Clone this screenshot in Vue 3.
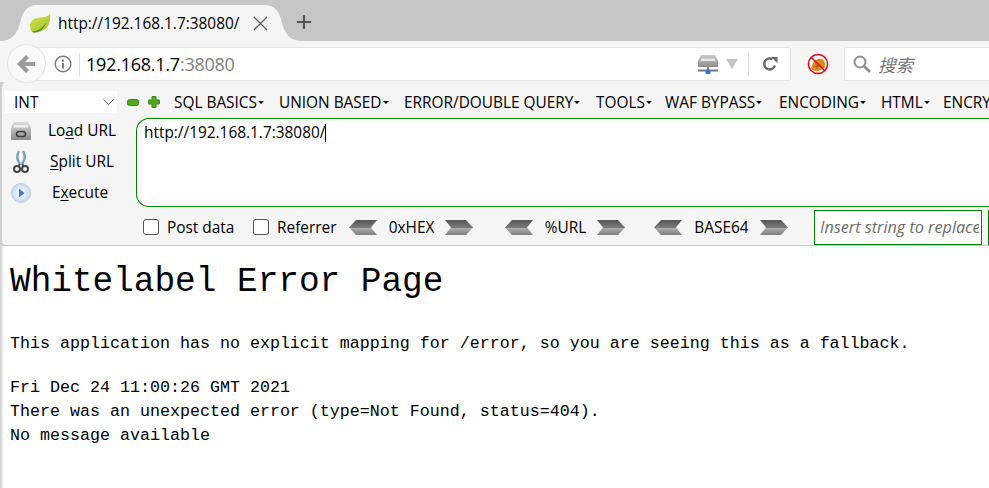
<script setup>
const menus = ['SQL BASICS', 'UNION BASED', 'ERROR/DOUBLE QUERY', 'TOOLS', 'WAF BYPASS', 'ENCODING', 'HTML', 'ENCRYPTION']
const lines = ['Fri Dec 24 11:00:26 GMT 2021', 'There was an unexpected error (type=Not Found, status=404).', 'No message available']
</script>

<template>
  <div class="window">
    <header class="tabstrip">
      <svg class="tabshape" width="302" height="37" viewBox="0 0 302 37">
        <path d="M0 37C12 37 17 30 20 19C23 6 28 1 38 1H264C274 1 279 6 282 19C285 30 290 37 302 37Z" fill="#f5f5f5" />
      </svg>
      <div class="tab">
        <svg class="leaf" width="22" height="20" viewBox="0 0 22 20">
          <defs>
            <linearGradient id="leafg" x1="0" y1="0" x2="1" y2="1">
              <stop offset="0" stop-color="#d2e04a" />
              <stop offset="1" stop-color="#a6c92e" />
            </linearGradient>
          </defs>
          <path d="M21 0.500C19.500 3.500 16.500 4 12 4.500C5 5 1 8 1 13C1 16 2 18.500 4.500 19.500C11 20 18.500 17 20.500 9C21.300 6 21.500 3 21 0.500Z" fill="url(#leafg)" />
          <path d="M3 18.500C8 18 14 15 17 9.500C16 15 11 19 5 19.500C4 19.500 3.500 19 3 18.500Z" fill="#4f8a32" />
        </svg>
        <span class="tabtitle">http://192.168.1.7:38080/</span>
        <svg class="close" width="15" height="15" viewBox="0 0 15 15"><path d="M1 1L14 14M14 1L1 14" stroke="#5c5c5c" stroke-width="1.300" fill="none" /></svg>
      </div>
      <svg class="newtab" width="16" height="16" viewBox="0 0 16 16"><path d="M8 1V15M1 8H15" stroke="#555" stroke-width="2.200" fill="none" /></svg>
    </header>

    <nav class="navbar">
      <button class="back">
        <svg width="18" height="18" viewBox="0 0 18 18"><path d="M9 0L0 9L9 18L12 15L8 11H18V7H8L12 3Z" fill="#9b9b9b" /></svg>
      </button>
      <div class="urlbox">
        <svg class="info" width="18" height="18" viewBox="0 0 18 18">
          <circle cx="9" cy="9" r="7.800" fill="none" stroke="#7a7a7a" stroke-width="1.400" />
          <rect x="8" y="8" width="2" height="5.500" fill="#7a7a7a" />
          <rect x="8" y="4.600" width="2" height="2" fill="#7a7a7a" />
        </svg>
        <span class="divider"></span>
        <span class="url">192.168.1.7<span class="port">:38080</span></span>
        <svg class="drive" width="22" height="20" viewBox="0 0 22 20">
          <defs>
            <linearGradient id="driveg" x1="0" y1="0" x2="0" y2="1">
              <stop offset="0" stop-color="#c9c9c9" />
              <stop offset="1" stop-color="#8f8f8f" />
            </linearGradient>
          </defs>
          <path d="M4 1H18L21 7V13H1V7Z" fill="url(#driveg)" />
          <rect x="4" y="4.500" width="14" height="2.500" fill="#e6e6e6" />
          <rect x="1" y="15.500" width="20" height="2" fill="#777" />
          <rect x="10" y="13" width="2" height="3" fill="#777" />
          <rect x="8.500" y="16" width="5" height="4" rx="1" fill="#2f78d6" />
        </svg>
        <svg class="drop" width="12" height="10" viewBox="0 0 12 10"><path d="M0 0H12L6 10Z" fill="#c4c4c4" /></svg>
        <span class="divider second"></span>
        <svg class="reload" width="16" height="16" viewBox="0 0 16 16">
          <path d="M13 9.500A5.500 5.500 0 1 1 10.500 3.200" fill="none" stroke="#6a6a6a" stroke-width="2.400" />
          <path d="M9 0.800L15.500 1V7.200Z" fill="#6a6a6a" />
        </svg>
      </div>
      <svg class="noscript" width="22" height="22" viewBox="0 0 22 22">
        <path d="M4 15L7 8L12 5.500L16 6.500L18.500 11L17 15.500L11 18L6 17.500Z" fill="#e28418" />
        <path d="M8 13L12 11.500L10 15Z" fill="#8a5a18" />
        <circle cx="11" cy="11" r="9.600" fill="none" stroke="#d3121e" stroke-width="1.500" />
        <path d="M4.200 4.200L17.800 17.800" stroke="#d3121e" stroke-width="1.500" />
      </svg>
      <div class="searchbox">
        <svg width="18" height="18" viewBox="0 0 18 18">
          <circle cx="7" cy="7" r="5.500" fill="none" stroke="#8f8f8f" stroke-width="2" />
          <path d="M11 11L17 17" stroke="#8f8f8f" stroke-width="2.600" />
        </svg>
        <span class="searchtext">搜索</span>
      </div>
    </nav>

    <section class="hackbar">
      <div class="menurow">
        <div class="select">
          <span>INT</span>
          <svg width="11" height="6" viewBox="0 0 11 6"><path d="M0.500 0.500L5.500 5.500L10.500 0.500" fill="none" stroke="#666" /></svg>
        </div>
        <svg class="pm" width="12" height="9" viewBox="0 0 12 9"><rect x="0.500" y="1.500" width="11" height="6" rx="2" fill="#52a81f" stroke="#3c8a14" /></svg>
        <svg class="pm plus" width="12" height="12" viewBox="0 0 12 12"><path d="M4 0.500H8V4H11.500V8H8V11.500H4V8H0.500V4H4Z" fill="#52a81f" stroke="#3c8a14" stroke-linejoin="round" /></svg>
        <div class="menus">
          <span v-for="m in menus" :key="m" class="menu">{{ m }}<i class="caret"></i></span>
        </div>
      </div>

      <div class="editrow">
        <div class="side">
          <div class="action">
            <svg width="22" height="20" viewBox="0 0 22 20">
              <defs>
                <linearGradient id="boxg" x1="0" y1="0" x2="0" y2="1">
                  <stop offset="0" stop-color="#dcdcdc" />
                  <stop offset="1" stop-color="#8a8a8a" />
                </linearGradient>
              </defs>
              <path d="M4 1H18L21 7V18Q21 19 20 19H2Q1 19 1 18V7Z" fill="url(#boxg)" />
              <rect x="4" y="4" width="14" height="2.500" fill="#efefef" />
              <rect x="6.500" y="10.500" width="9" height="5" rx="2.500" fill="none" stroke="#3f3f3f" stroke-width="1.500" />
            </svg>
            <span class="label">Lo<u>a</u>d URL</span>
          </div>
          <div class="action">
            <svg width="22" height="24" viewBox="0 0 22 24">
              <path d="M9 1C6.500 5 7 10 10 14M13 1C15.500 5 15 10 12 14" fill="none" stroke="#6f9cc7" stroke-width="2.200" />
              <circle cx="7" cy="19" r="3" fill="none" stroke="#444" stroke-width="2" />
              <circle cx="15" cy="19" r="3" fill="none" stroke="#444" stroke-width="2" />
              <path d="M10 14L8 16.500M12 14L14 16.500" stroke="#444" stroke-width="2" />
            </svg>
            <span class="label"><u>S</u>plit URL</span>
          </div>
          <div class="action">
            <svg width="22" height="22" viewBox="0 0 22 22">
              <defs>
                <radialGradient id="execg">
                  <stop offset="0" stop-color="#ffffff" />
                  <stop offset="1" stop-color="#c5d9f1" />
                </radialGradient>
              </defs>
              <circle cx="11" cy="11" r="9.500" fill="url(#execg)" stroke="#b5cdea" />
              <path d="M9 6.500L14.500 11L9 15.500Z" fill="#3f78c4" />
            </svg>
            <span class="label exec">E<u>x</u>ecute</span>
          </div>
        </div>
        <div class="editor">http://192.168.1.7:38080/<i class="cursor"></i></div>
      </div>

      <div class="optrow">
        <label class="check"><i class="box"></i>Post data</label>
        <label class="check ref"><i class="box"></i>Referrer</label>
        <div class="enc hex">
          <svg class="chev" width="28" height="15" viewBox="0 0 28 15"><path d="M7 0H28L22 7.500L28 15H7L0 7.500Z" fill="url(#cheg)" /><defs><linearGradient id="cheg" x1="0" y1="0" x2="0" y2="1"><stop offset="0" stop-color="#555" /><stop offset="0.500" stop-color="#7a7a7a" /><stop offset="0.520" stop-color="#b0b0b0" /><stop offset="1" stop-color="#7d7d7d" /></linearGradient></defs></svg>
          <span>0xHEX</span>
          <svg class="chev" width="28" height="15" viewBox="0 0 28 15"><path d="M0 0H21L28 7.500L21 15H0L6 7.500Z" fill="url(#cheg)" /></svg>
        </div>
        <div class="enc url-enc">
          <svg class="chev" width="28" height="15" viewBox="0 0 28 15"><path d="M7 0H28L22 7.500L28 15H7L0 7.500Z" fill="url(#cheg)" /></svg>
          <span>%URL</span>
          <svg class="chev" width="28" height="15" viewBox="0 0 28 15"><path d="M0 0H21L28 7.500L21 15H0L6 7.500Z" fill="url(#cheg)" /></svg>
        </div>
        <div class="enc b64">
          <svg class="chev" width="28" height="15" viewBox="0 0 28 15"><path d="M7 0H28L22 7.500L28 15H7L0 7.500Z" fill="url(#cheg)" /></svg>
          <span>BASE64</span>
          <svg class="chev" width="28" height="15" viewBox="0 0 28 15"><path d="M0 0H21L28 7.500L21 15H0L6 7.500Z" fill="url(#cheg)" /></svg>
        </div>
        <div class="replace"><span>Insert string to replace</span></div>
        <div class="replace with"></div>
      </div>
    </section>

    <main class="page">
      <h1>Whitelabel Error Page</h1>
      <p class="lead">This application has no explicit mapping for /error, so you are seeing this as a fallback.</p>
      <div v-for="l in lines" :key="l" class="line">{{ l }}</div>
    </main>
  </div>
</template>

<style scoped>
.window {
  width: 989px;
  height: 488px;
  overflow: hidden;
  background: #cfcfcf;
  font-family: "Open Sans", "Noto Sans", sans-serif;
  color: #000;
}
.tabstrip {
  position: relative;
  height: 41px;
  background: #c6c6c6;
  display: flex;
  align-items: flex-start;
}
.tabshape {
  position: absolute;
  left: 0;
  top: 4px;
}
.tab {
  position: relative;
  display: flex;
  align-items: center;
  margin-left: 29px;
  margin-top: 13px;
  height: 20px;
  width: 240px;
}
.leaf { flex: none; }
.tabtitle {
  margin-left: 7px;
  font-size: 15.400px;
  white-space: nowrap;
  width: 195px;
  flex: none;
}
.close { flex: none; }
.newtab {
  position: relative;
  margin-left: 27px;
  margin-top: 14px;
}
.navbar {
  height: 41px;
  background: #f5f5f5;
  display: flex;
  align-items: center;
  padding-left: 7px;
}
.back {
  position: relative;
  z-index: 1;
  width: 39px;
  height: 39px;
  flex: none;
  border-radius: 50%;
  background: #f9f9f9;
  border: 1px solid #e2e2e2;
  padding: 0;
  display: flex;
  align-items: center;
  justify-content: center;
  margin-top: 4px;
}
.back svg { margin-left: -2px; }
.urlbox {
  margin-left: -16px;
  width: 761px;
  height: 34px;
  flex: none;
  margin-top: 5px;
  box-sizing: border-box;
  background: #fff;
  border: 1px solid #e4e4e4;
  border-radius: 2px;
  display: flex;
  align-items: center;
  padding-left: 23px;
}
.info { flex: none; }
.divider {
  width: 1px;
  height: 23px;
  background: #dcdcdc;
  margin-left: 7px;
  flex: none;
}
.url {
  margin-left: 6px;
  font-size: 18px;
  letter-spacing: -0.240px;
  width: 611px;
  flex: none;
  white-space: nowrap;
}
.port { color: #7f7f7f; }
.drive { flex: none; }
.drop { margin-left: 7px; flex: none; }
.divider.second { margin-left: 10px; }
.reload { margin-left: 13px; flex: none; }
.noscript { margin-left: 16px; margin-top: 4px; flex: none; }
.searchbox {
  margin-left: 15px;
  margin-top: 5px;
  height: 34px;
  width: 200px;
  flex: none;
  box-sizing: border-box;
  background: #fff;
  border: 1px solid #e4e4e4;
  display: flex;
  align-items: center;
  padding-left: 8px;
}
.searchtext {
  margin-left: 7px;
  font-family: "Noto Sans CJK SC", sans-serif;
  font-style: italic;
  font-size: 17.500px;
  color: #777;
}
.hackbar {
  height: 164px;
  box-sizing: border-box;
  background: #f5f5f5;
  border-bottom: 1px solid #c8c8c8;
  border-left: 2px solid #cfcfcf;
  border-radius: 6px 0 0 6px;
}
.menurow {
  height: 36px;
  display: flex;
  align-items: center;
  padding-left: 3px;
  padding-top: 4px;
  box-sizing: border-box;
}
.select {
  width: 112px;
  height: 22px;
  flex: none;
  background: #fff;
  box-sizing: border-box;
  padding: 0 3px 0 9px;
  display: flex;
  align-items: center;
  justify-content: space-between;
  font-size: 15.400px;
}
.pm { margin-left: 10px; flex: none; }
.pm.plus { margin-left: 9px; }
.menus {
  margin-left: 14px;
  display: grid;
  grid-template-columns: 105px 125px 192px 69px 114px 102px 62px auto;
  white-space: nowrap;
  font-size: 15.400px;
}
.menu { display: flex; align-items: center; }
.caret {
  margin-left: 1px;
  width: 0;
  height: 0;
  border-left: 3px solid transparent;
  border-right: 3px solid transparent;
  border-top: 3px solid #000;
}
.editrow {
  display: flex;
  height: 89px;
}
.side {
  width: 134px;
  flex: none;
  display: flex;
  flex-direction: column;
  margin-top: -3px;
}
.action {
  height: 31px;
  flex: none;
  display: flex;
  align-items: center;
  padding-left: 8px;
}
.action svg { flex: none; }
.label {
  margin-left: 16px;
  width: 68px;
  text-align: center;
  font-size: 15.400px;
  white-space: nowrap;
  display: flex;
  justify-content: center;
}
.label u { text-underline-offset: 2px; }
.exec { margin-left: 14px; }
.editor {
  flex: 1;
  box-sizing: border-box;
  background: #fff;
  border: 1px solid #008000;
  border-right: 0;
  border-radius: 13px 0 0 13px;
  padding: 3px 0 0 7px;
  font-size: 15.400px;
  white-space: nowrap;
}
.cursor {
  display: inline-block;
  width: 1px;
  height: 18px;
  background: #000;
  vertical-align: -4px;
}
.optrow {
  height: 38px;
  display: flex;
  align-items: center;
  box-sizing: border-box;
  padding: 2px 0 0 141px;
  font-size: 15.400px;
  white-space: nowrap;
}
.check {
  display: flex;
  align-items: center;
  width: 110px;
  flex: none;
}
.box {
  width: 14px;
  height: 14px;
  border: 1px solid #555;
  border-radius: 3px;
  background: #fff;
  margin-right: 8px;
  flex: none;
}
.check.ref { width: 96px; }
.enc {
  display: flex;
  align-items: center;
  justify-content: space-between;
  flex: none;
  width: 124px;
}
.chev { flex: none; }
.enc span { margin-left: 1px; }
.enc.url-enc { margin-left: 32px; width: 120px; }
.enc.b64 { margin-left: 29px; width: 134px; }
.replace {
  margin-left: 26px;
  flex: none;
  width: 168px;
  height: 35px;
  box-sizing: border-box;
  border: 1px solid #008000;
  background: #fff;
  display: flex;
  align-items: center;
  padding-left: 5px;
  padding-right: 2px;
  overflow: hidden;
  font-style: italic;
  font-size: 16.200px;
  color: #6d6d6d;
}
.replace span { overflow: hidden; }
.replace.with { margin-left: 6px; width: 40px; }
.page {
  height: 242px;
  box-sizing: border-box;
  padding: 16px 0 0 10px;
  font-family: "Liberation Mono", monospace;
  background: linear-gradient(90deg, #cdcdcd, #fff 4px);
}
h1 {
  margin: 0;
  font-size: 34.400px;
  line-height: 40px;
  font-weight: 400;
}
.lead {
  margin: 30px 0 20px;
  font-size: 16.670px;
  line-height: 24px;
  white-space: nowrap;
}
.line {
  font-size: 16.670px;
  line-height: 24px;
  white-space: nowrap;
}
</style>

<style>
body { margin: 0; }
</style>
